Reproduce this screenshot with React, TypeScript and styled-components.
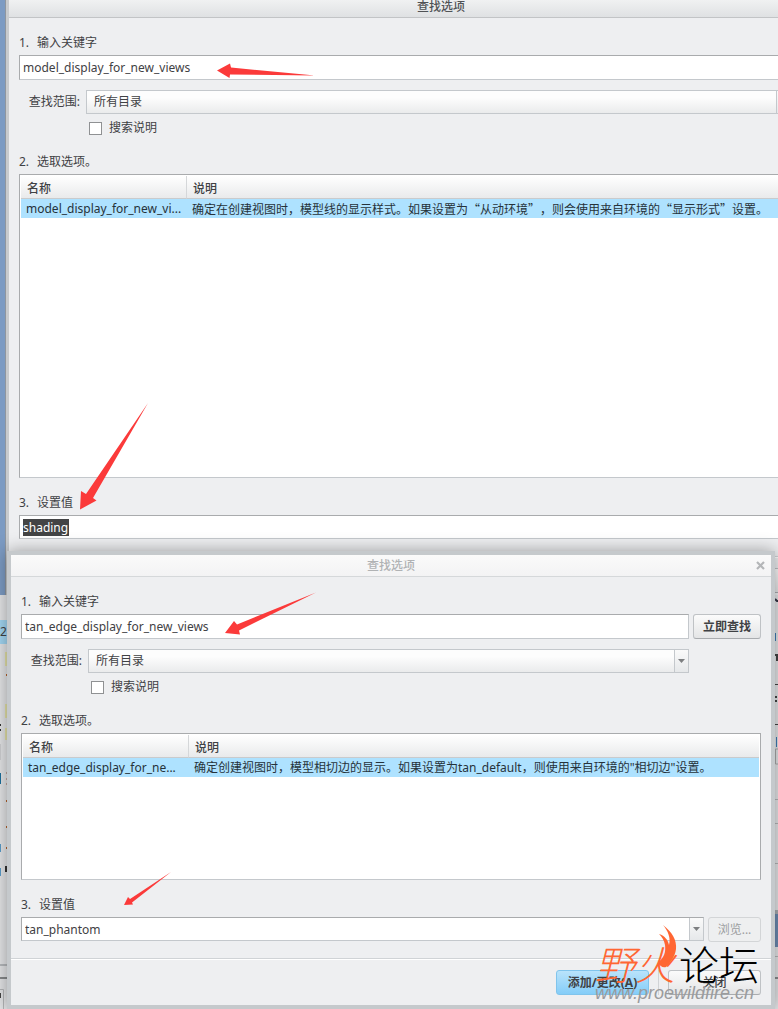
import React from "react";
import styled, { createGlobalStyle, css } from "styled-components";

const latin = `"Noto Sans", "Noto Sans CJK SC", sans-serif`;
const han = `"Noto Sans CJK SC", sans-serif`;

const GlobalStyle = createGlobalStyle`
  *, *::before, *::after { box-sizing: border-box; }
  body { margin: 0; background: #dcdddf; }
  button, input, select { font: inherit; color: inherit; margin: 0; }
`;

const Desktop = styled.main`
  position: relative;
  display: grid;
  grid-template-columns: minmax(0, 1fr);
  overflow: hidden;
  background: #7c9bc3;
  font: 12px/16px ${latin};
  color: #3f4144;
`;

/* ---------- application lying under the dialogs ---------- */

const Underlay = styled.div`
  grid-area: 1 / 1;
  margin-top: 595px;
  display: flex;
  justify-content: space-between;
  background: #e4e5e7;
`;

const LeftEdge = styled.div`
  width: 8px;
  overflow: hidden;
  padding-top: 23px;
`;

const ActiveRow = styled.div`
  height: 24px;
  margin-top: 2px;
  background: #a2d6f2;
  line-height: 24px;
`;

const EdgeMarks = styled.svg`
  display: block;
`;

/* ---------- dialog frame ---------- */

const Frame = styled.section<{ $front?: boolean }>`
  grid-area: 1 / 1;
  align-self: start;
  position: relative;
  background: #eeeff1;
  ${(p) =>
    p.$front
      ? css`
          margin: 551px 3px 0 7px;
          border: 4px solid #c5c9cc;
          box-shadow: 0 0 16px rgba(0, 0, 0, 0.36);
        `
      : css`
          margin: -4px -98px 0 6px;
          border-left: 3px solid #c8cbce;
          border-right: 3px solid #c8cbce;
          box-shadow: -1px 0 0 #8f969e;
        `}
`;

const TitleBar = styled.header<{ $front?: boolean }>`
  position: relative;
  height: 22px;
  border-bottom: 1px solid ${(p) => (p.$front ? "#d5d8da" : "#c2c4c6")};
  background: ${(p) =>
    p.$front
      ? "linear-gradient(#fafafa, #f3f3f4)"
      : "linear-gradient(#f4f5f5, #dfe1e3)"};
  color: ${(p) => (p.$front ? "#b0b2b4" : "#505255")};
`;

const Title = styled.h1`
  margin: 0;
  font-size: 12px;
  font-weight: 500;
  line-height: 22px;
  text-align: center;
`;

const CloseButton = styled.button`
  position: absolute;
  top: 3px;
  right: 3px;
  display: grid;
  place-items: center;
  width: 15px;
  height: 15px;
  padding: 0;
  border: 0;
  background: none;
`;

const Body = styled.div`
  padding: 14px 10px 16px;
`;

const StepLabel = styled.label`
  display: flex;
  height: 20px;
  margin-bottom: 3px;
  line-height: 22px;
`;

const StepNumber = styled.span`
  width: 18px;
`;

const Search = styled.div`
  display: grid;
  grid-template-columns: minmax(0, 1fr) 68px;
  column-gap: 4px;
  row-gap: 10px;
`;

const fieldBorder = css`
  border: 1px solid #c4c8cc;
  border-top-color: #a9abad;
  border-left-color: #a9abad;
`;

const KeywordInput = styled.input`
  height: 25px;
  min-width: 0;
  padding: 0 3px;
  ${fieldBorder}
  background: #fff;
  outline: 0;
`;

const Button = styled.button<{ $kind?: "primary" | "muted"; $strong?: boolean }>`
  height: 25px;
  padding: 0;
  border: 1px solid #bfc2c5;
  border-bottom-color: #a9acaf;
  border-radius: 3px;
  background: linear-gradient(#fbfbfb, #e4e5e6);
  white-space: nowrap;
  font-weight: ${(p) => (p.$strong ? 700 : 500)};
  ${(p) =>
    p.$kind === "primary" &&
    css`
      border-color: #80c4ec;
      background: linear-gradient(#b9e3fb, #84cdf8);
    `}
  ${(p) =>
    p.$kind === "muted" &&
    css`
      border-color: #d3d5d7;
      background: #eeeff0;
      color: #9c9ea0;
      font-weight: 400;
    `}
`;

const ScopeRow = styled.div`
  display: flex;
  align-items: center;
`;

const ScopeLabel = styled.label`
  width: 67px;
  padding-right: 6px;
  text-align: right;
  white-space: nowrap;
`;

const SelectBox = styled.div`
  display: flex;
  flex: 1;
  min-width: 0;
  height: 24px;
  border: 1px solid #c4c8cc;
  background: linear-gradient(#fdfdfd 30%, #eaebec);
`;

const ScopeSelect = styled.select`
  flex: 1;
  min-width: 0;
  padding: 0 7px;
  border: 0;
  background: none;
  appearance: none;
  outline: 0;
`;

const ArrowCell = styled.span`
  display: grid;
  place-items: center;
  width: 14px;
  border-left: 1px solid #c4c8cc;
  background: linear-gradient(#fafafa, #e6e8ea);
`;

const ArrowButton = styled(ArrowCell).attrs({ as: "button" })`
  padding: 0;
  border-width: 0 0 0 1px;
`;

const CheckLabel = styled.label`
  display: flex;
  align-items: center;
  gap: 7px;
  width: max-content;
  height: 20px;
  margin: 4px 0 13px 70px;
`;

const CheckBox = styled.input`
  width: 13px;
  height: 13px;
  border: 1px solid #8f9193;
  background: #fff;
  appearance: none;
`;

const ListBox = styled.div<{ $height: number }>`
  height: ${(p) => p.$height}px;
  margin-bottom: 14px;
  padding: 1px;
  overflow: hidden;
  ${fieldBorder}
  border-right-color: #a9abad;
  background: #fff;
`;

const Options = styled.table`
  width: 100%;
  border-collapse: separate;
  border-spacing: 0;
  table-layout: fixed;
`;

const HeadCell = styled.th`
  height: 23px;
  padding: 4px 6px 0;
  border-bottom: 1px solid #c9cbcd;
  background: linear-gradient(#fff, #e9eaeb);
  line-height: 16px;
  font-weight: 500;
  text-align: left;
  &:first-child {
    width: 166px;
    border-right: 1px solid #d5d7d9;
  }
`;

const Cell = styled.td<{ $han?: boolean }>`
  height: 19px;
  padding: 0 5px;
  overflow: hidden;
  background: #aee2ff;
  color: #26323a;
  line-height: 18px;
  white-space: nowrap;
  font-family: ${(p) => (p.$han ? han : latin)};
  text-spacing-trim: space-all;
`;

const ValueRow = styled.div`
  display: grid;
  grid-template-columns: minmax(0, 1fr) 53px;
  align-items: start;
  gap: 4px;
`;

const Combo = styled.div`
  display: flex;
  height: 24px;
  ${fieldBorder}
  background: #fff;
`;

const ComboText = styled.div`
  flex: 1;
  display: flex;
  align-items: center;
  min-width: 0;
  padding: 0 3px;
`;

const ValueInput = styled.input<{ $selected?: boolean }>`
  width: ${(p) => (p.$selected ? "46px" : "100%")};
  height: 17px;
  padding: 0;
  border: 0;
  outline: 0;
  background: ${(p) => (p.$selected ? "#434445" : "none")};
  color: ${(p) => (p.$selected ? "#fff" : "inherit")};
  line-height: 17px;
`;

const Footer = styled.footer<{ $front?: boolean }>`
  display: flex;
  justify-content: flex-end;
  gap: 9px;
  padding: 10px 10px ${(p) => (p.$front ? 10 : 2)}px;
  border-top: 1px solid #d0d3d6;
  box-shadow: inset 0 1px 0 #fff;
  ${Button} {
    width: 93px;
    margin-top: 1px;
  }
`;

const Divider = styled.span`
  width: 1px;
  margin-top: 1px;
  height: 25px;
  background: #d0d3d6;
`;

/* ---------- marks drawn over the windows ---------- */

const Arrows = styled.svg`
  position: absolute;
  top: 0;
  left: 0;
  pointer-events: none;
`;

const Watermark = styled.div`
  position: absolute;
  right: 8px;
  bottom: 2px;
  width: 168px;
  pointer-events: none;
`;

const SiteName = styled.div`
  font: 300 40px/44px ${han};
  color: #000;
  white-space: nowrap;
  em {
    margin-right: 4px;
    color: #ff6633;
  }
`;

const SiteUrl = styled.div`
  margin-top: -2px;
  font: italic 18px/20px "Liberation Sans", sans-serif;
  color: #9a9b9d;
`;

const Flame = styled.svg`
  position: absolute;
  top: -16px;
  left: 62px;
`;

const Triangle = () => (
  <svg width="7" height="4" viewBox="0 0 7 4" aria-hidden="true">
    <path d="M0 0h7L3.500 4z" fill="#7d7f81" />
  </svg>
);

interface DialogProps {
  id: string;
  front?: boolean;
  keyword: string;
  optionName: string;
  description: string;
  hanDescription?: boolean;
  value: string;
  valueSelected?: boolean;
  listHeight: number;
  children?: React.ReactNode;
}

function FindDialog(p: DialogProps) {
  return (
    <Frame $front={p.front} aria-labelledby={`${p.id}-title`}>
      <TitleBar $front={p.front}>
        <Title id={`${p.id}-title`}>查找选项</Title>
        <CloseButton type="button" aria-label="关闭窗口">
          <svg width="9" height="9" viewBox="0 0 9 9" aria-hidden="true">
            <path d="M1 1l7 7M8 1l-7 7" stroke="#b4b6b8" strokeWidth="2.200" />
          </svg>
        </CloseButton>
      </TitleBar>
      <Body>
        <StepLabel htmlFor={`${p.id}-keyword`}>
          <StepNumber>1.</StepNumber>输入关键字
        </StepLabel>
        <Search>
          <KeywordInput id={`${p.id}-keyword`} defaultValue={p.keyword} />
          <Button type="button" $strong>立即查找</Button>
          <ScopeRow>
            <ScopeLabel htmlFor={`${p.id}-scope`}>查找范围:</ScopeLabel>
            <SelectBox>
              <ScopeSelect id={`${p.id}-scope`}>
                <option>所有目录</option>
              </ScopeSelect>
              <ArrowCell>
                <Triangle />
              </ArrowCell>
            </SelectBox>
          </ScopeRow>
        </Search>
        <CheckLabel>
          <CheckBox type="checkbox" />
          搜索说明
        </CheckLabel>
        <StepLabel as="div">
          <StepNumber>2.</StepNumber>选取选项。
        </StepLabel>
        <ListBox $height={p.listHeight}>
          <Options>
            <thead>
              <tr>
                <HeadCell>名称</HeadCell>
                <HeadCell>说明</HeadCell>
              </tr>
            </thead>
            <tbody>
              <tr>
                <Cell>{p.optionName}</Cell>
                <Cell $han={p.hanDescription}>{p.description}</Cell>
              </tr>
            </tbody>
          </Options>
        </ListBox>
        <StepLabel htmlFor={`${p.id}-value`}>
          <StepNumber>3.</StepNumber>设置值
        </StepLabel>
        <ValueRow>
          <Combo>
            <ComboText>
              <ValueInput
                id={`${p.id}-value`}
                defaultValue={p.value}
                $selected={p.valueSelected}
              />
            </ComboText>
            <ArrowButton type="button" aria-label="展开">
              <Triangle />
            </ArrowButton>
          </Combo>
          <Button type="button" $kind="muted" disabled>浏览...</Button>
        </ValueRow>
      </Body>
      <Footer $front={p.front}>
        <Button type="button" $kind="primary" $strong>
          添加/更改(<u>A</u>)
        </Button>
        <Divider />
        <Button type="button">关闭</Button>
      </Footer>
      {p.children}
    </Frame>
  );
}

export default function App() {
  return (
    <Desktop lang="zh-CN">
      <GlobalStyle />
      <Underlay>
        <LeftEdge>
          <ActiveRow>2</ActiveRow>
          <EdgeMarks width="8" height="365" aria-hidden="true">
            <path d="M6 31h2M6 157h2M6 183h2M6 204h2" stroke="#b5622c" strokeWidth="2" />
            <path d="M6 8v14M6 60v14M6 84v12" stroke="#e4e2a8" strokeWidth="2" />
            <path d="M0 81h1M0 86h1M6 222v6" stroke="#333" strokeWidth="2" />
            <path d="M0 100h1v16h-1z" fill="#cfd0d2" />
            <path d="M0 129h1v11h-1z" fill="#1c6f9c" />
            <path d="M6 129h2M6 135h2M6 140h2" stroke="#a66a58" />
            <path d="M0 200h1v8h-1zM0 224h1v8h-1z" fill="#5a9cc8" />
            <path d="M0 321h8" stroke="#b6b9bc" strokeWidth="2" />
            <path d="M0 334h8" stroke="#87898b" strokeWidth="2" />
            <path d="M0 345.500h3.500v20" fill="none" stroke="#b4b6b8" />
            <path d="M0 349h1v5h-1z" fill="#444" />
          </EdgeMarks>
        </LeftEdge>
        <EdgeMarks width="3" height="414" aria-hidden="true">
          <path d="M0 4l2 2h1" fill="none" stroke="#334" strokeWidth="2" />
          <path d="M0 38h1v8h-1zM1 142h1v10h-1z" fill="#3f7ab5" />
          <path d="M0 60h2v6M0 102h2M0 106h2" fill="none" stroke="#444" strokeWidth="2" />
          <path d="M0 89.500h3M0 129.500h3" stroke="#444" />
          <path d="M3 154H0.500v15H3" fill="none" stroke="#aaa" />
          <path d="M0 204.500h3M0 228.500h3M0 268.500h3M0 361.500h3" stroke="#b4b6b8" />
          <path d="M0 315h3v4H0z" fill="#a8abb0" />
          <path d="M0 319h3v33H0z" fill="#6b89b0" />
          <path d="M0 383h3" stroke="#898b8d" strokeWidth="2" />
        </EdgeMarks>
      </Underlay>

      <FindDialog
        id="model"
        keyword="model_display_for_new_views"
        optionName="model_display_for_new_vi..."
        description="确定在创建视图时，模型线的显示样式。如果设置为“从动环境”，则会使用来自环境的“显示形式”设置。"
        hanDescription
        value="shading"
        valueSelected
        listHeight={304}
      />

      <FindDialog
        id="tangent"
        front
        keyword="tan_edge_display_for_new_views"
        optionName="tan_edge_display_for_ne..."
        description={
          '确定创建视图时，模型相切边的显示。如果设置为tan_default，则使用来自环境的"相切边"设置。'
        }
        value="tan_phantom"
        listHeight={147}
      >
        <Watermark>
          <SiteName>
            <em>野火</em>论坛
          </SiteName>
          <Flame width="20" height="44" viewBox="0 0 20 44" aria-hidden="true">
            <path
              d="M6 0C15 7 20 15 19 24C18 32 13 38 9 42C6 43 2 41 1 37C7 33 9 27 8 20C7 15 5 12 2 9C8 11 11 15 12 20C14 13 11 6 6 0z"
              fill="#ff6633"
            />
          </Flame>
          <SiteUrl>www.proewildfire.cn</SiteUrl>
        </Watermark>
      </FindDialog>

      <Arrows width="320" height="910" aria-hidden="true" fill="#fb3a3a">
        <path d="M217 70.500L230 63.500L231 67.500L315 75.500L230 74.500L229.500 78z" />
        <path d="M80 509.500L81 491L86 494L148 403L93 498L96.500 500.500z" />
        <path d="M225 633L234 621L237 624.500L316 592.500L239 630.500L240 634.500z" />
        <path d="M124 905L128 897L130 899L171 872L132 902.500L133 904.500z" />
      </Arrows>
    </Desktop>
  );
}
